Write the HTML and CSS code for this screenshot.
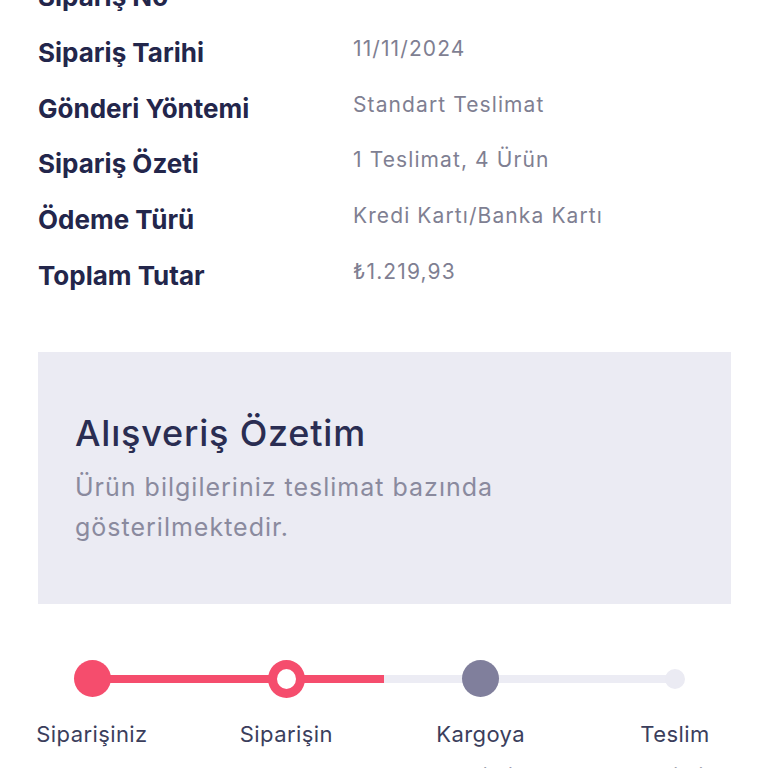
FILE: index.html
```html
<!DOCTYPE html>
<html lang="tr">
<head>
<meta charset="utf-8">
<title>Sipariş Detayı</title>
<link rel="stylesheet" href="styles.css">
</head>
<body>
<main class="page">
  <section class="details">
    <div class="row"><div class="label">Sipariş No</div><div class="value">340237649</div></div>
    <div class="row"><div class="label">Sipariş Tarihi</div><div class="value">11/11/2024</div></div>
    <div class="row"><div class="label">Gönderi Yöntemi</div><div class="value">Standart Teslimat</div></div>
    <div class="row"><div class="label">Sipariş Özeti</div><div class="value">1 Teslimat, 4 Ürün</div></div>
    <div class="row"><div class="label">Ödeme Türü</div><div class="value">Kredi Kartı/Banka Kartı</div></div>
    <div class="row"><div class="label">Toplam Tutar</div><div class="value">₺1.219,93</div></div>
  </section>

  <section class="summary">
    <h2 class="summary-title">Alışveriş Özetim</h2>
    <p class="summary-text">Ürün bilgileriniz teslimat bazında<br>gösterilmektedir.</p>
  </section>

  <section class="progress">
    <div class="track">
      <div class="track-bg"></div>
      <div class="track-fill"></div>
      <div class="dots">
        <span class="dot-slot"><span class="dot dot-done"></span></span>
        <span class="dot-slot"><span class="dot dot-current"></span></span>
        <span class="dot-slot"><span class="dot dot-next"></span></span>
        <span class="dot-slot"><span class="dot dot-end"></span></span>
      </div>
    </div>
    <div class="steps">
      <div class="step">Siparişiniz<br>alındı</div>
      <div class="step">Siparişin<br>hazırlanıyor</div>
      <div class="step">Kargoya<br>verildi</div>
      <div class="step">Teslim<br>edildi</div>
    </div>
  </section>
</main>
</body>
</html>
```
FILE: styles.css
```css
* { box-sizing: border-box; }
html, body { margin: 0; padding: 0; background: #ffffff; }
body {
  font-family: Inter, "Open Sans", "Liberation Sans", sans-serif;
  overflow: hidden;
  height: 768px;
}
.page {
  margin-top: -31px;
  padding: 0 37px 0 38px;
}
.details { display: flex; flex-direction: column; }
.row {
  display: flex;
  align-items: flex-start;
  height: 55.75px;
}
.label {
  width: 315px;
  flex: none;
  font-weight: 700;
  font-size: 26px;
  line-height: 56px;
  color: #23264b;
}
.value {
  font-size: 21px;
  line-height: 48px;
  color: #7f7f92;
  letter-spacing: 1.1px;
}
.summary {
  margin-top: 48px;
  background: #ebebf3;
  height: 252px;
  padding: 59px 37px 0 37px;
}
.summary-title {
  margin: 0;
  font-weight: 500;
  font-size: 36px;
  line-height: 44px;
  letter-spacing: 0.8px;
  color: #2a2d52;
}
.summary-text {
  margin: 12px 0 0 0;
  font-size: 25px;
  line-height: 40px;
  color: #8a8a9e;
  letter-spacing: 1px;
}
.progress { margin-top: 56px; }
.track {
  position: relative;
  height: 38px;
  margin: 0 37.5px 0 35.5px;
}
.track-bg {
  position: absolute;
  left: 18px; right: 10px; top: 15px;
  height: 8px;
  background: #ececf4;
}
.track-fill {
  position: absolute;
  left: 18px; top: 15px;
  width: 292px;
  height: 8px;
  background: #f54d6d;
}
.dots {
  position: relative;
  display: flex;
  justify-content: space-between;
  height: 38px;
}
.dot-slot {
  width: 37px; height: 38px;
  display: flex; align-items: center; justify-content: center;
}
.dot { display: block; border-radius: 50%; }
.dot-done { width: 37px; height: 37px; background: #f54d6d; }
.dot-current { width: 38px; height: 38px; background: #ffffff; border: 9.5px solid #f54d6d; }
.dot-next { width: 37px; height: 37px; background: #807f9c; }
.dot-end { width: 20px; height: 20px; background: #ebebf3; }
.steps {
  display: flex;
  justify-content: space-between;
  margin: 15px 0 0 -21px;
  width: 733px;
}
.step {
  width: 150px;
  text-align: center;
  font-size: 22px;
  line-height: 42px;
  letter-spacing: 0.4px;
  color: #3b3e5c;
}
```
